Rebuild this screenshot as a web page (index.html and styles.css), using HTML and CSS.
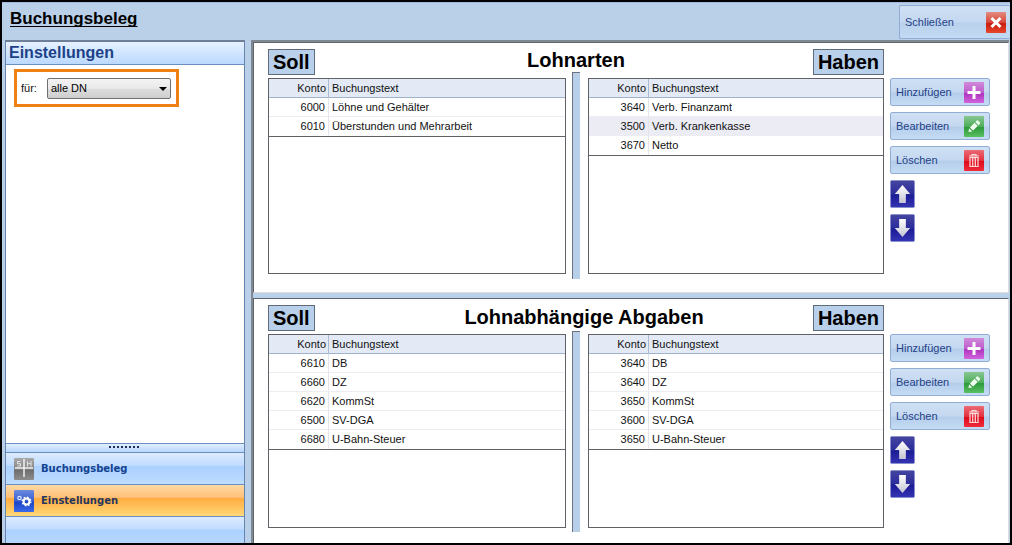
FILE: index.html
```html
<!DOCTYPE html>
<html lang="de">
<head>
<meta charset="utf-8">
<title>Buchungsbeleg</title>
<link rel="stylesheet" href="styles.css">
</head>
<body>
<svg class="defs" width="0" height="0" aria-hidden="true">
  <defs>
    <linearGradient id="g-red" x1="0" y1="0" x2="0" y2="1"><stop offset="0" stop-color="#e58a80"/><stop offset=".5" stop-color="#d8473a"/><stop offset=".55" stop-color="#c81d10"/><stop offset="1" stop-color="#e8492a"/></linearGradient>
    <linearGradient id="g-pink" x1="0" y1="0" x2="0" y2="1"><stop offset="0" stop-color="#d08ada"/><stop offset=".5" stop-color="#bf5ccc"/><stop offset=".55" stop-color="#b035c0"/><stop offset="1" stop-color="#d264dc"/></linearGradient>
    <linearGradient id="g-green" x1="0" y1="0" x2="0" y2="1"><stop offset="0" stop-color="#86c890"/><stop offset=".5" stop-color="#4fae5c"/><stop offset=".55" stop-color="#2c9a3c"/><stop offset="1" stop-color="#5cc062"/></linearGradient>
    <linearGradient id="g-trash" x1="0" y1="0" x2="0" y2="1"><stop offset="0" stop-color="#ea6a74"/><stop offset=".5" stop-color="#e2303e"/><stop offset=".55" stop-color="#dc0a1c"/><stop offset="1" stop-color="#f02c3a"/></linearGradient>
    <linearGradient id="g-navy" x1="0" y1="0" x2="0" y2="1"><stop offset="0" stop-color="#4444a0"/><stop offset=".5" stop-color="#2c2c9c"/><stop offset=".55" stop-color="#1c1c94"/><stop offset="1" stop-color="#3434b4"/></linearGradient>
    <linearGradient id="g-arrow" x1="0" y1="0" x2="0" y2="1"><stop offset="0" stop-color="#ffffff"/><stop offset="1" stop-color="#c4c4d4"/></linearGradient>
    <linearGradient id="g-grey" x1="0" y1="0" x2="0" y2="1"><stop offset="0" stop-color="#a8a8a8"/><stop offset=".5" stop-color="#888888"/><stop offset=".55" stop-color="#6e6e6e"/><stop offset="1" stop-color="#8c8c8c"/></linearGradient>
    <linearGradient id="g-blue" x1="0" y1="0" x2="0" y2="1"><stop offset="0" stop-color="#6c8ade"/><stop offset=".5" stop-color="#3a5ed0"/><stop offset=".55" stop-color="#1c44c4"/><stop offset="1" stop-color="#3c6ae8"/></linearGradient>
    <symbol id="i-close" viewBox="0 0 20 21"><rect width="20" height="21" rx="1" fill="url(#g-red)"/><path d="M5.500 6l9 9M14.500 6l-9 9" stroke="#fff" stroke-width="3"/></symbol>
    <symbol id="i-plus" viewBox="0 0 20 21"><rect width="20" height="21" rx="1" fill="url(#g-pink)"/><path d="M10 4v13M3.500 10.500h13" stroke="#fff" stroke-width="3"/></symbol>
    <symbol id="i-pen" viewBox="0 0 20 21"><rect width="20" height="21" rx="1" fill="url(#g-green)"/><path d="M4.500 16l.6-3.800 3.200 3.200z M5.900 11.400l4.600-4.600 3.200 3.200-4.600 4.600z M11.300 6l1.300-1.300q.8-.7 1.600 0l1.600 1.600q.7.800 0 1.600l-1.300 1.300z" fill="#effbef"/></symbol>
    <symbol id="i-trash" viewBox="0 0 20 21"><rect width="20" height="21" rx="1" fill="url(#g-trash)"/><path d="M5 6h10M8 6V4.500h4V6M6 7.500v9h8v-9zM8.700 8v8M11.300 8v8" fill="none" stroke="#ffdcdc" stroke-width="1.200"/></symbol>
    <symbol id="i-up" viewBox="0 0 24 27"><rect width="24" height="27" rx="1" fill="url(#g-navy)"/><path d="M12 4l8 9.500h-4.500V23h-7v-9.500H4z" fill="url(#g-arrow)"/></symbol>
    <symbol id="i-down" viewBox="0 0 24 27"><rect width="24" height="27" rx="1" fill="url(#g-navy)"/><path d="M12 23l8-9.500h-4.500V4h-7v9.500H4z" fill="url(#g-arrow)"/></symbol>
  </defs>
</svg>
<div class="window">
  <header class="titlebar">
    <h1 class="title">Buchungsbeleg</h1>
    <button class="btn btn-close" type="button"><span>Schließen</span><svg class="btn-icon" aria-hidden="true"><use href="#i-close"/></svg></button>
  </header>
  <div class="content">
    <aside class="sidebar">
      <h2 class="sidebar-title">Einstellungen</h2>
      <div class="sidebar-body">
        <div class="filter">
          <label class="filter-label" for="dn">für:</label>
          <span class="combo">
            <select class="combo-select" id="dn"><option>alle DN</option></select>
            <svg class="combo-arrow" viewBox="0 0 8 4" aria-hidden="true"><path d="M0 0h8L4 4z"/></svg>
          </span>
        </div>
      </div>
      <div class="grip"><span class="grip-dots"></span></div>
      <nav class="nav">
        <button class="nav-item" type="button">
          <svg class="nav-icon" viewBox="0 0 20 22" aria-hidden="true"><rect width="20" height="22" rx="1" fill="url(#g-grey)"/><path d="M10 1v18M1 10h18" stroke="#f0f0f0" stroke-width="1.500"/><path d="M6.500 3.500h-3v2.200h3V8h-3M13.500 3v5.500M17 3v5.500M13.500 5.700H17" fill="none" stroke="#e4e4e4"/></svg>
          Buchungsbeleg
        </button>
        <button class="nav-item nav-item-active" type="button">
          <svg class="nav-icon" viewBox="0 0 20 22" aria-hidden="true"><rect width="20" height="22" rx="1" fill="url(#g-blue)"/><circle cx="5.500" cy="8" r="1.700" fill="none" stroke="#dce6ff" stroke-width="1.200"/><circle cx="12.500" cy="11.500" r="2.900" fill="none" stroke="#fff" stroke-width="2"/><circle cx="12.500" cy="11.500" r="4.200" fill="none" stroke="#fff" stroke-width="1.600" stroke-dasharray="1.650 1.650"/></svg>
          Einstellungen
        </button>
      </nav>
      <div class="nav-rest"></div>
    </aside>
    <main class="main">
      <section class="panel">
        <div class="ledger">
          <h2 class="ledger-title">Lohnarten</h2>
          <h3 class="tag">Soll</h3>
          <h3 class="tag tag-right">Haben</h3>
          <div class="list list-left">
            <table class="table">
              <thead><tr><th class="num">Konto</th><th>Buchungstext</th></tr></thead>
              <tbody>
                <tr><td class="num">6000</td><td>Löhne und Gehälter</td></tr>
                <tr><td class="num">6010</td><td>Überstunden und Mehrarbeit</td></tr>
              </tbody>
            </table>
          </div>
          <div class="divider"></div>
          <div class="list list-right">
            <table class="table">
              <thead><tr><th class="num">Konto</th><th>Buchungstext</th></tr></thead>
              <tbody>
                <tr><td class="num">3640</td><td>Verb. Finanzamt</td></tr>
                <tr class="selected"><td class="num">3500</td><td>Verb. Krankenkasse</td></tr>
                <tr><td class="num">3670</td><td>Netto</td></tr>
              </tbody>
            </table>
          </div>
          <div class="actions">
            <button class="btn" type="button"><span>Hinzufügen</span><svg class="btn-icon" aria-hidden="true"><use href="#i-plus"/></svg></button>
            <button class="btn" type="button"><span>Bearbeiten</span><svg class="btn-icon" aria-hidden="true"><use href="#i-pen"/></svg></button>
            <button class="btn" type="button"><span>Löschen</span><svg class="btn-icon" aria-hidden="true"><use href="#i-trash"/></svg></button>
            <button class="move" type="button" aria-label="Nach oben"><svg class="move-icon" aria-hidden="true"><use href="#i-up"/></svg></button>
            <button class="move" type="button" aria-label="Nach unten"><svg class="move-icon" aria-hidden="true"><use href="#i-down"/></svg></button>
          </div>
        </div>
      </section>
      <div class="splitter"></div>
      <section class="panel">
        <div class="ledger ledger-lower">
          <h2 class="ledger-title">Lohnabhängige Abgaben</h2>
          <h3 class="tag">Soll</h3>
          <h3 class="tag tag-right">Haben</h3>
          <div class="list list-left">
            <table class="table">
              <thead><tr><th class="num">Konto</th><th>Buchungstext</th></tr></thead>
              <tbody>
                <tr><td class="num">6610</td><td>DB</td></tr>
                <tr><td class="num">6660</td><td>DZ</td></tr>
                <tr><td class="num">6620</td><td>KommSt</td></tr>
                <tr><td class="num">6500</td><td>SV-DGA</td></tr>
                <tr><td class="num">6680</td><td>U-Bahn-Steuer</td></tr>
              </tbody>
            </table>
          </div>
          <div class="divider"></div>
          <div class="list list-right">
            <table class="table">
              <thead><tr><th class="num">Konto</th><th>Buchungstext</th></tr></thead>
              <tbody>
                <tr><td class="num">3640</td><td>DB</td></tr>
                <tr><td class="num">3640</td><td>DZ</td></tr>
                <tr><td class="num">3650</td><td>KommSt</td></tr>
                <tr><td class="num">3600</td><td>SV-DGA</td></tr>
                <tr><td class="num">3650</td><td>U-Bahn-Steuer</td></tr>
              </tbody>
            </table>
          </div>
          <div class="actions">
            <button class="btn" type="button"><span>Hinzufügen</span><svg class="btn-icon" aria-hidden="true"><use href="#i-plus"/></svg></button>
            <button class="btn" type="button"><span>Bearbeiten</span><svg class="btn-icon" aria-hidden="true"><use href="#i-pen"/></svg></button>
            <button class="btn" type="button"><span>Löschen</span><svg class="btn-icon" aria-hidden="true"><use href="#i-trash"/></svg></button>
            <button class="move" type="button" aria-label="Nach oben"><svg class="move-icon" aria-hidden="true"><use href="#i-up"/></svg></button>
            <button class="move" type="button" aria-label="Nach unten"><svg class="move-icon" aria-hidden="true"><use href="#i-down"/></svg></button>
          </div>
        </div>
      </section>
    </main>
  </div>
</div>
</body>
</html>
```
FILE: styles.css
```css
* { box-sizing: border-box; }

body {
  margin: 0;
  font: 11px/14px "Liberation Sans", Arial, sans-serif;
  color: #111;
}

h1, h2, h3 { margin: 0; }
button, select { font: inherit; }
svg { display: block; flex: none; }
.defs { position: absolute; }

.window {
  display: flex;
  flex-direction: column;
  height: 100vh;
  border: 2px solid #000;
  background: #bad0e9;
}

/* Title bar */
.titlebar {
  display: flex;
  justify-content: space-between;
  align-items: flex-start;
  height: 38px;
  padding: 2px 0 0 8px;
  border-top: 1px solid #a3b9e0;
}
.title {
  padding-top: 4px;
  font-size: 17px;
  line-height: 20px;
  color: #000;
  text-decoration: underline;
  text-decoration-thickness: 1px;
  text-underline-offset: 2px;
  text-decoration-skip-ink: none;
}

/* Buttons */
.btn {
  display: flex;
  justify-content: space-between;
  align-items: center;
  width: 100px;
  height: 28px;
  padding: 0 5px;
  border: 1px solid #92acd4;
  border-radius: 2px;
  color: #1f3f87;
  background: linear-gradient(#cfe0f4, #c4d8f0 50%, #b4cdea 54%, #c5dcf4);
}
.btn-icon { width: 20px; height: 21px; }
.btn-close {
  width: 111px;
  height: 34px;
  padding: 0 4px 0 5px;
  border-right: 0;
  background: linear-gradient(#cfe0f4, #c4d8f0 50%, #b9d1ec 54%, #c3daf3);
}

.content {
  display: flex;
  flex: 1;
  min-height: 0;
}

/* Sidebar */
.sidebar {
  display: flex;
  flex-direction: column;
  width: 240px;
  margin-left: 3px;
  border: 1px solid #6784ae;
  border-top: 2px solid #6f7f97;
  border-bottom: 0;
  background: #fff;
}
.sidebar-title {
  height: 23px;
  padding-left: 3px;
  border-bottom: 1px solid #6b8fc0;
  font-size: 16px;
  line-height: 22px;
  color: #1c4186;
  background: linear-gradient(#e6f1ff, #bbd9ff);
}
.sidebar-body { flex: 1; padding: 4px 8px; }
.filter {
  display: flex;
  align-items: center;
  gap: 10px;
  width: 165px;
  height: 38px;
  border: 3px solid #ee8014;
  padding: 0 5px 0 4px;
}
.combo { position: relative; flex: 1; }
.combo-select {
  display: block;
  width: 100%;
  height: 21px;
  padding: 0 4px 0 3px;
  border: 1px solid #707070;
  border-radius: 2px;
  appearance: none;
  color: #000;
  background: linear-gradient(#f3f3f3, #e9e9e9 50%, #dcdcdc 54%, #cfcfcf);
}
.combo-arrow {
  position: absolute;
  top: 9px;
  right: 4px;
  width: 8px;
  height: 4px;
  pointer-events: none;
}
.grip {
  display: flex;
  justify-content: center;
  height: 9px;
  padding-top: 2px;
  border-top: 1px solid #6b8fc0;
  background: linear-gradient(#e0eeff, #b8d6fc);
}
.grip-dots {
  width: 32px;
  height: 2px;
  background: repeating-linear-gradient(90deg, #1c3060 0 2px, transparent 2px 4px);
}
.nav-item {
  display: flex;
  align-items: center;
  gap: 7px;
  width: 100%;
  height: 32px;
  padding: 0 8px;
  border: 0;
  border-top: 1px solid #6b8fc0;
  font: bold 10px/14px "DejaVu Sans", Verdana, sans-serif;
  color: #12418f;
  background: linear-gradient(#dcebff, #c2dcff 40%, #abd1ff 42%, #bddcff);
}
.nav-item-active {
  color: #26365f;
  background: linear-gradient(#ffd9a4, #ffc078 40%, #ffab3f 42%, #ffd878);
}
.nav-icon { width: 20px; height: 22px; }
.nav-rest {
  height: 27px;
  border-top: 1px solid #6b8fc0;
  background: linear-gradient(#dcebff, #c2dcff 46%, #abd1ff 50%, #b6d8ff);
}

/* Panels */
.main {
  display: grid;
  grid-template-rows: 251fr 5px 245fr;
  flex: 1;
  min-width: 0;
  margin: 0 1px 0 6px;
  border: 1px solid #808893;
  border-width: 2px 0 0 2px;
}
.panel {
  min-height: 0;
  border: 1px solid #5f646c;
  border-right-color: #ddd;
  border-bottom-color: #ddd;
  background: #fff;
}
.panel:last-child { border-bottom: 0; }
.splitter { background: #b9d1ea; }

.ledger {
  display: grid;
  grid-template-columns: minmax(0, 1fr) 8px minmax(0, 1fr) 100px;
  grid-template-rows: 23px 6px 1fr 5px;
  height: 100%;
  padding: 6px 24px 13px 14px;
}
.ledger-lower {
  grid-template-rows: 26px 3px 1fr 4px;
  padding-bottom: 11px;
}
.ledger-title {
  grid-area: 1 / 1 / 2 / 4;
  text-align: center;
  font-size: 20px;
  line-height: 22px;
  color: #000;
}
.ledger-lower .ledger-title { line-height: 24px; padding-left: 16px; }
.tag {
  grid-area: 1 / 1 / 3 / 2;
  place-self: start;
  height: 26px;
  padding: 0 4px;
  border: 1px solid #5f6b7b;
  font-size: 20px;
  line-height: 25px;
  color: #000;
  background: #b8d0ea;
}
.tag-right { grid-area: 1 / 3 / 3 / 4; justify-self: end; }
.list {
  min-height: 0;
  overflow: hidden;
  border: 1px solid #5f6166;
}
.list-left { grid-area: 3 / 1 / 4 / 2; margin-right: 6px; }
.list-right { grid-area: 3 / 3 / 4 / 4; margin-left: 8px; }
.divider {
  grid-area: 2 / 2 / 5 / 3;
  border: solid #6b7480;
  border-width: 1px 0 0 1px;
  background: #b8cfe9;
}
.actions {
  grid-area: 3 / 4 / 5 / 5;
  display: flex;
  flex-direction: column;
  gap: 6px;
  margin: 0 -6px 0 6px;
}
.move {
  width: 25px;
  height: 28px;
  padding: 0;
  border: 1px solid #8a92cc;
  border-radius: 2px;
  background: #24249a;
}
.move-icon { width: 100%; height: 100%; }

/* Tables */
.table {
  width: 100%;
  table-layout: fixed;
  border-collapse: separate;
  border-spacing: 0;
  border-bottom: 1px solid #5f6166;
}
.table th, .table td {
  height: 19px;
  padding: 0 3px;
  border-bottom: 1px solid #ececf2;
  text-align: left;
  font-weight: normal;
}
.table th { border-bottom-color: #9fb4cc; background: #e3eaf5; }
.table tbody tr:last-child td { border-bottom-color: #fff; }
.table .num {
  width: 60px;
  padding-right: 3px;
  border-right: 1px solid #e4e4ec;
  text-align: right;
}
.table th.num { padding-right: 2px; border-right-color: #a9bccf; }
.table .selected td { background: #ececf5; }
```
